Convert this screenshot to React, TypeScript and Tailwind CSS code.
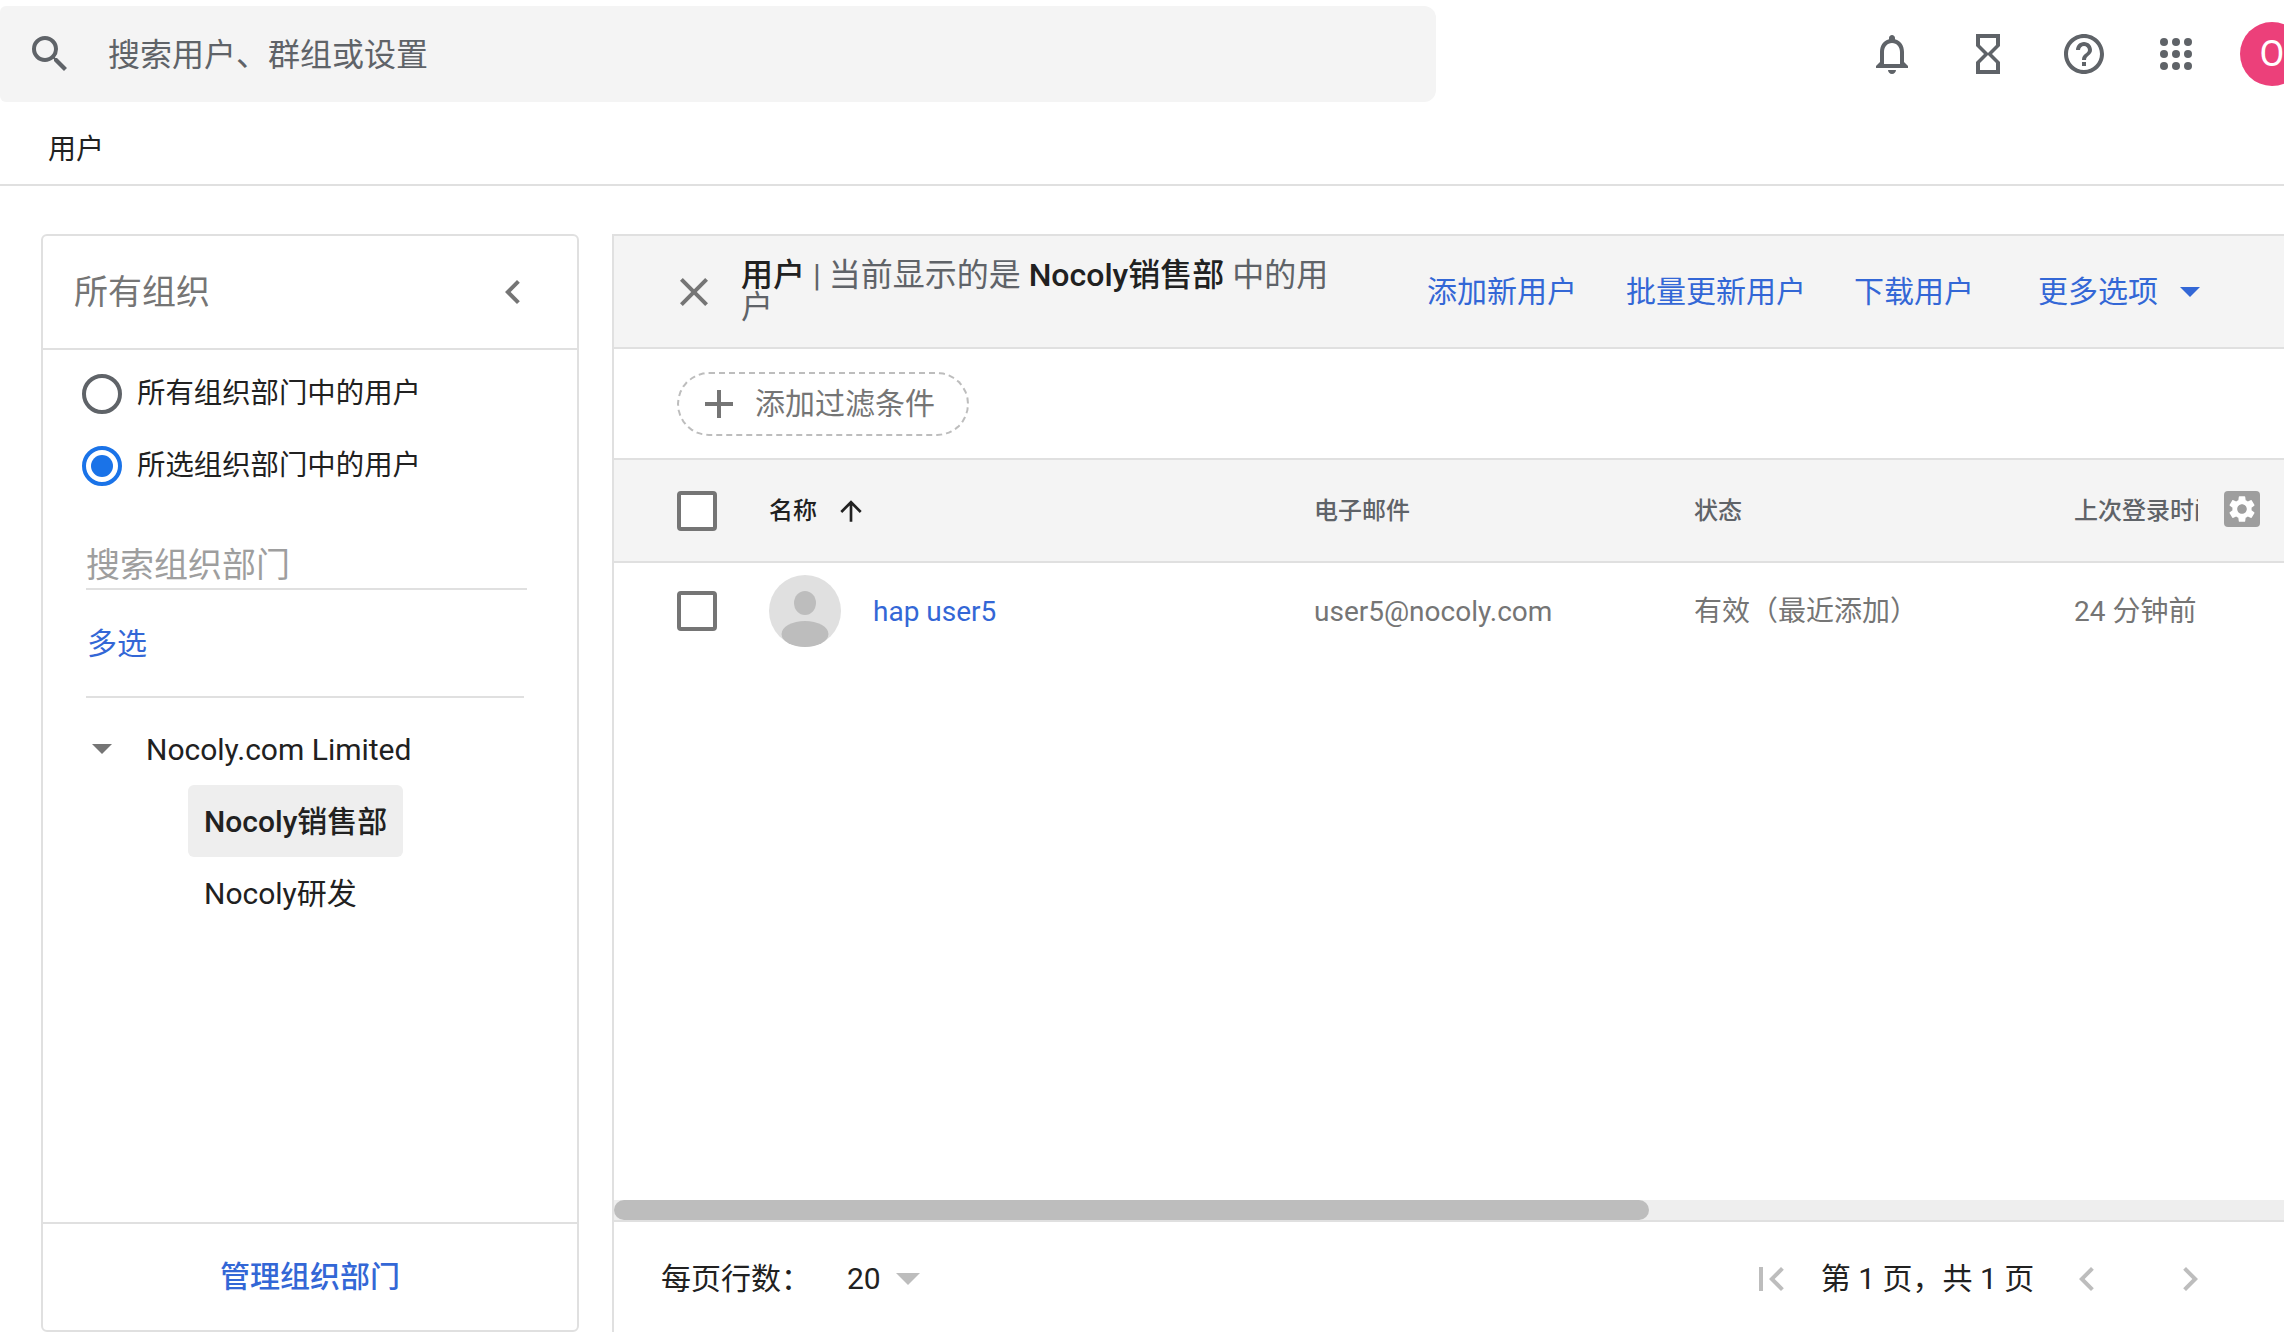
import { MdAdd, MdArrowUpward, MdChevronLeft, MdChevronRight, MdClose, MdFirstPage, MdHelpOutline, MdHourglassEmpty, MdNotificationsNone, MdSearch, MdSettings } from 'react-icons/md';

function AppsIcon() {
    const dots = [4, 16, 28];
    return (
        <svg width="32" height="32" viewBox="0 0 32 32" fill="#5f6368">
            {dots.map((y) => dots.map((x) => <circle key={`${x}-${y}`} cx={x} cy={y} r="4" />))}
        </svg>
    );
}

function Caret({ className }: { className: string }) {
    return (
        <svg className={className} viewBox="0 0 20 10">
            <path d="M0 0H20L10 10Z" fill="currentColor" />
        </svg>
    );
}

function Radio({ checked, label }: { checked?: boolean; label: string }) {
    return (
        <div className="flex h-[72px] items-center gap-[15px]">
            <span className={`flex h-[40px] w-[40px] items-center justify-center rounded-full border-[4px] ${checked ? 'border-[#1a73e8]' : 'border-[#5f6368]'}`}>
                {checked && <span className="h-[22px] w-[22px] rounded-full bg-[#1a73e8]" />}
            </span>
            <span className="text-[28.4px] text-[#212121]">{label}</span>
        </div>
    );
}

function Checkbox() {
    return <span className="block h-[40px] w-[40px] shrink-0 rounded-[4px] border-[4px] border-[#757575] bg-white" />;
}

function OrgPanel() {
    return (
        <aside className="flex w-[538px] shrink-0 flex-col rounded-[6px] border-2 border-[#e0e0e0] bg-white">
            <div className="flex h-[114px] shrink-0 items-center justify-between border-b-2 border-[#e0e0e0] pl-[31px] pr-[40px]">
                <span className="text-[34px] text-[#757575]">所有组织</span>
                <MdChevronLeft size={48} color="#757575" />
            </div>
            <div className="flex flex-1 flex-col pt-[8px]">
                <div className="pl-[39px]">
                    <Radio label="所有组织部门中的用户" />
                    <Radio checked label="所选组织部门中的用户" />
                </div>
                <div className="ml-[43px] mr-[50px] mt-[28px] flex h-[60px] items-center border-b-2 border-[#e0e0e0] pt-[12px] text-[34px] text-[#9e9e9e]">搜索组织部门</div>
                <div className="ml-[44px] mt-[34px] text-[30px] leading-[40px] text-[#3367d6]">多选</div>
                <div className="ml-[43px] mr-[53px] mt-[32px] border-b-2 border-[#e0e0e0]" />
                <div className="mt-[15px] flex h-[72px] items-center pl-[49px]">
                    <Caret className="h-[10px] w-[20px] text-[#757575]" />
                    <span className="ml-[34px] text-[30px] text-[#212121]">Nocoly.com Limited</span>
                </div>
                <div className="ml-[145px] flex h-[72px] w-[215px] items-center rounded-[6px] bg-[#eeeeee] pl-[16px] text-[30px] font-medium text-[#212121]">Nocoly销售部</div>
                <div className="ml-[161px] flex h-[72px] items-center text-[30px] text-[#212121]">Nocoly研发</div>
            </div>
            <div className="flex h-[108px] shrink-0 items-center justify-center border-t-2 border-[#e0e0e0] pb-[2px] text-[30px] font-medium text-[#3367d6]">管理组织部门</div>
        </aside>
    );
}

function UserPanel() {
    return (
        <section className="flex min-w-0 flex-1 flex-col border-l-2 border-t-2 border-[#e0e0e0] bg-white">
            <div className="flex h-[113px] shrink-0 items-center border-b-2 border-[#e0e0e0] bg-[#f4f4f4] pl-[56px]">
                <MdClose size={48} color="#757575" className="shrink-0" />
                <div className="ml-[23px] w-[590px] shrink-0 pb-[2px] text-[32px] leading-[32px] text-[#5f6368]">
                    <span className="font-medium text-[#212121]">用户</span> | 当前显示的是 <span className="font-medium text-[#212121]">Nocoly销售部</span> 中的用户
                </div>
                <div className="ml-[96px] flex items-center text-[30px] text-[#3367d6]">
                    <span>添加新用户</span>
                    <span className="ml-[49px]">批量更新用户</span>
                    <span className="ml-[48px]">下载用户</span>
                    <span className="ml-[64px]">更多选项</span>
                    <Caret className="ml-[22px] h-[10px] w-[20px]" />
                </div>
            </div>
            <div className="flex h-[109px] shrink-0 items-center pl-[63px]">
                <div className="flex h-[64px] w-[292px] items-center rounded-[32px] border-2 border-dashed border-[#bdbdbd] pl-[16px]">
                    <MdAdd size={48} color="#757575" />
                    <span className="ml-[12px] text-[30px] text-[#757575]">添加过滤条件</span>
                </div>
            </div>
            <div className="flex h-[105px] shrink-0 items-center border-y-2 border-[#e0e0e0] bg-[#f4f4f4] pl-[63px] text-[24px] font-medium text-[#5f6368]">
                <Checkbox />
                <div className="ml-[52px] flex w-[545px] shrink-0 items-center text-[#212121]">
                    <span>名称</span>
                    <MdArrowUpward size={32} className="ml-[18px]" />
                </div>
                <span className="w-[380px] shrink-0">电子邮件</span>
                <span className="w-[380px] shrink-0">状态</span>
                <span className="w-[124px] shrink-0 overflow-hidden whitespace-nowrap">上次登录时间</span>
                <span className="mb-[3px] ml-[26px] flex h-[36px] w-[36px] shrink-0 items-center justify-center rounded-[4px] bg-[#9e9e9e]">
                    <MdSettings size={32} color="white" />
                </span>
            </div>
            <div className="flex h-[96px] shrink-0 items-center pl-[63px] text-[28px] text-[#757575]">
                <Checkbox />
                <div className="ml-[52px] flex w-[545px] shrink-0 items-center">
                    <svg width="72" height="72" viewBox="0 0 72 72" className="shrink-0">
                        <circle cx="36" cy="36" r="36" fill="#e0e0e0" />
                        <ellipse cx="36" cy="28" rx="11" ry="12" fill="#bdbdbd" />
                        <ellipse cx="36" cy="59" rx="23.5" ry="13" fill="#bdbdbd" />
                    </svg>
                    <span className="ml-[32px] pt-[2px] text-[#3367d6]">hap user5</span>
                </div>
                <span className="w-[380px] shrink-0 pt-[2px]">user5@nocoly.com</span>
                <span className="w-[380px] shrink-0 pt-[2px]">有效（最近添加）</span>
                <span className="shrink-0 whitespace-nowrap pt-[2px]">24 分钟前</span>
            </div>
            <div className="flex-1" />
            <div className="h-[22px] shrink-0 border-b-2 border-[#e0e0e0] bg-[#eeeeee]">
                <div className="h-full w-[1035px] rounded-[10px] bg-[#bdbdbd]" />
            </div>
            <div className="flex h-[110px] shrink-0 items-center pl-[47px] pt-[3px] text-[30px] text-[#212121]">
                <span className="w-[186px] shrink-0">每页行数：</span>
                <span>20</span>
                <Caret className="ml-[15px] h-[12px] w-[24px] text-[#bdbdbd]" />
                <MdFirstPage size={48} color="#bdbdbd" className="ml-[827px] shrink-0" />
                <span className="ml-[26px] shrink-0 whitespace-nowrap">第 1 页，共 1 页</span>
                <MdChevronLeft size={48} color="#bdbdbd" className="ml-[29px] shrink-0" />
                <MdChevronRight size={48} color="#bdbdbd" className="ml-[55px] shrink-0" />
            </div>
        </section>
    );
}

export default function App() {
    return (
        <div className="flex h-[1336px] w-[2284px] flex-col overflow-hidden bg-white font-['Roboto','Noto_Sans_CJK_SC',sans-serif]">
            <header className="flex h-[108px] shrink-0 items-start pt-[6px]">
                <div className="flex h-[96px] w-[1436px] shrink-0 items-center rounded-r-[12px] rounded-l-[6px] bg-[#f4f4f4] pl-[26px] text-[32px] text-[#5f6368]">
                    <MdSearch size={48} color="#5f6368" />
                    <span className="ml-[34px] pt-[2px]">搜索用户、群组或设置</span>
                </div>
                <div className="ml-[432px] flex h-[96px] shrink-0 items-center">
                    <MdNotificationsNone size={48} color="#5f6368" />
                    <MdHourglassEmpty size={48} color="#5f6368" className="ml-[48px]" />
                    <MdHelpOutline size={48} color="#5f6368" className="ml-[48px]" />
                    <span className="ml-[52px]"><AppsIcon /></span>
                    <span className="ml-[48px] flex h-[64px] w-[64px] shrink-0 items-center justify-center rounded-full bg-[#ec407a] text-[36px] text-white">O</span>
                </div>
            </header>
            <div className="flex h-[78px] shrink-0 items-center border-b-2 border-[#e0e0e0] pl-[48px] pt-[8px] text-[28px] text-[#212121]">用户</div>
            <main className="flex min-h-0 flex-1 gap-[33px] pb-[4px] pl-[41px] pt-[48px]">
                <OrgPanel />
                <UserPanel />
            </main>
        </div>
    );
}
